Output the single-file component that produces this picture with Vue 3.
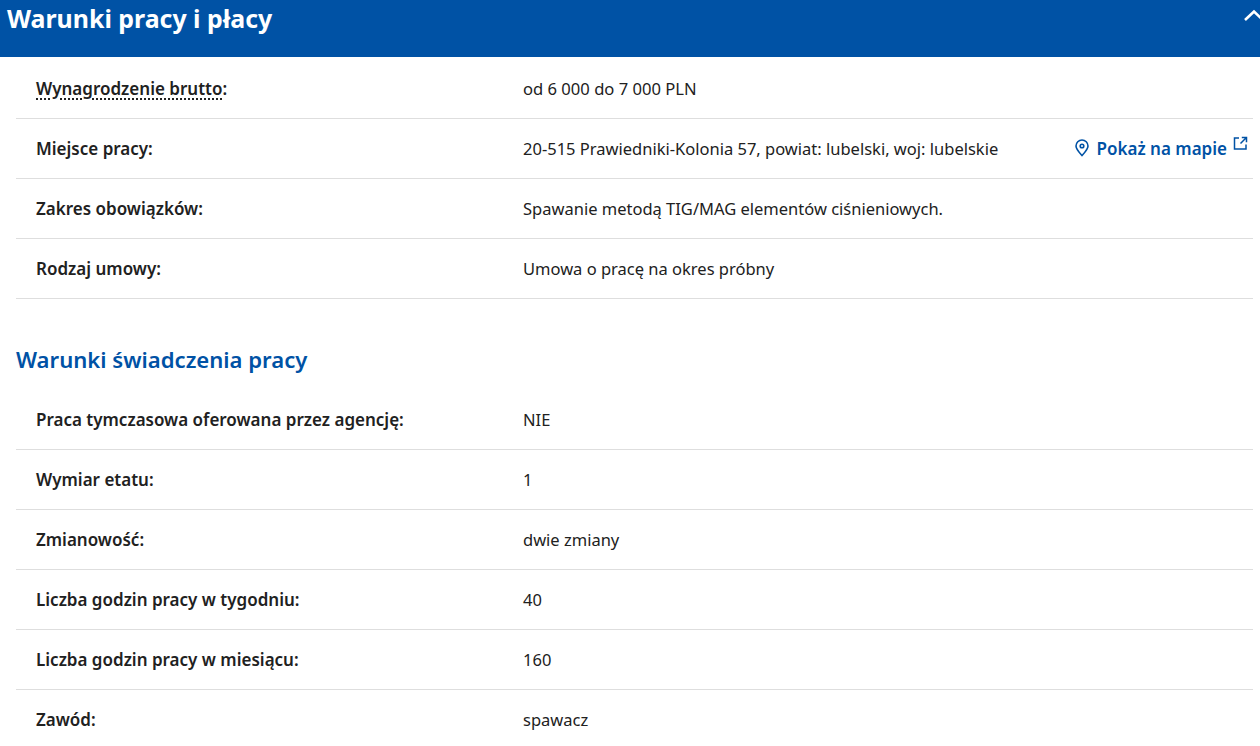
<script setup>
const first = [
  { label: 'Miejsce pracy:', value: '20-515 Prawiedniki-Kolonia 57, powiat: lubelski, woj: lubelskie', map: true },
  { label: 'Zakres obowiązków:', value: 'Spawanie metodą TIG/MAG elementów ciśnieniowych.' },
  { label: 'Rodzaj umowy:', value: 'Umowa o pracę na okres próbny' },
]
const second = [
  { label: 'Praca tymczasowa oferowana przez agencję:', value: 'NIE' },
  { label: 'Wymiar etatu:', value: '1' },
  { label: 'Zmianowość:', value: 'dwie zmiany' },
  { label: 'Liczba godzin pracy w tygodniu:', value: '40' },
  { label: 'Liczba godzin pracy w miesiącu:', value: '160' },
  { label: 'Zawód:', value: 'spawacz' },
]
</script>

<template>
  <div class="page">
    <header class="bar">
      <h1>Warunki pracy i płacy</h1>
      <svg class="chev" width="16" height="14" viewBox="0 0 16 14" fill="none">
        <path d="M1 11 L10 2.500 L19 11" stroke="#fff" stroke-width="2.600" />
      </svg>
    </header>
    <div class="list">
      <div class="row top">
        <div class="label"><span class="dotted">Wynagrodzenie brutto</span>:</div>
        <div class="value">od 6 000 do 7 000 PLN</div>
      </div>
      <div v-for="r in first" :key="r.label" class="row">
        <div class="label">{{ r.label }}</div>
        <div class="value">{{ r.value }}</div>
        <a v-if="r.map" class="map">
          <svg width="14" height="18" viewBox="0 0 14 18" fill="none" stroke="#0052a5" stroke-width="1.600">
            <path d="M7 16.500 C4 13.200 1 10.200 1 7 A6 6 0 0 1 13 7 C13 10.200 10 13.200 7 16.500 Z" />
            <circle cx="7" cy="7" r="1.800" />
          </svg>
          <span class="map-text">Pokaż na mapie</span>
          <svg class="ext" width="15" height="15" viewBox="0 0 15 15" fill="none" stroke="#0052a5" stroke-width="1.500">
            <path d="M6 2 H1.500 V13 H13 V8.500" />
            <path d="M7.500 7.500 L13.200 1.800 M8.800 1.500 H13.500 V6.200" />
          </svg>
        </a>
      </div>
    </div>
    <h2>Warunki świadczenia pracy</h2>
    <div class="list">
      <div v-for="r in second" :key="r.label" class="row">
        <div class="label">{{ r.label }}</div>
        <div class="value">{{ r.value }}</div>
      </div>
    </div>
  </div>
</template>

<style>
html, body { margin: 0; background: #fff; overflow: hidden; }
</style>

<style scoped>
.page {
  width: 1260px;
  height: 746px;
  overflow: hidden;
  font-family: "Noto Sans", "Open Sans", sans-serif;
  color: #212121;
  font-size: 17px;
}
.bar {
  height: 57px;
  background: #0052a5;
  position: relative;
  padding-left: 7px;
  box-sizing: border-box;
}
.bar h1 {
  margin: 0;
  padding-top: 1px;
  color: #fff;
  font-size: 24.900px;
  line-height: 34px;
  font-weight: 700;
}
.chev { position: absolute; right: 0; top: 9px; }
.list { margin: 0 7px 0 16px; }
.row {
  display: flex;
  align-items: center;
  height: 60px;
  box-sizing: border-box;
  border-bottom: 1px solid #dedede;
  padding-left: 20px;
  padding-bottom: 1px;
}
.row.top { height: 62px; padding-top: 2px; padding-bottom: 0; }
.row.top .value { font-size: 16.600px; }
.label { width: 487px; flex: none; font-weight: 600; }
.dotted {
  text-decoration: underline dotted 2px #212121;
  text-underline-offset: 3px;
}
.value { flex: 1; font-size: 16.500px; }
.map {
  display: flex;
  align-items: center;
  color: #0052a5;
  font-weight: 600;
  font-size: 17px;
  margin-right: 5px;
}
.map-text { margin-left: 8px; margin-right: 6px; }
.ext { position: relative; top: -5px; }
h2 {
  margin: 0;
  padding: 44px 0 0 16px;
  height: 91px;
  box-sizing: border-box;
  color: #0052a5;
  font-size: 22.100px;
  line-height: 32px;
  font-weight: 600;
}
</style>
